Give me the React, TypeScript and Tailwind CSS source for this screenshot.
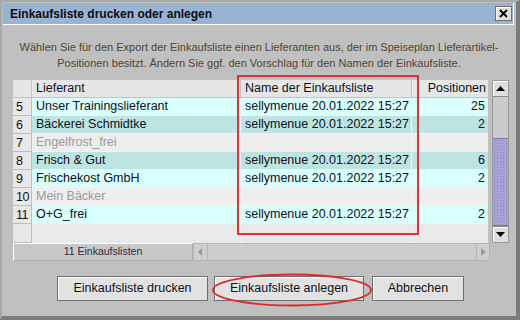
import React from "react";

const rows = [
  { n: 5, name: "Unser Trainingslieferant", list: "sellymenue 20.01.2022 15:27", pos: "25", kind: "a" },
  { n: 6, name: "Bäckerei Schmidtke", list: "sellymenue 20.01.2022 15:27", pos: "2", kind: "b" },
  { n: 7, name: "Engelfrost_frei", list: "", pos: "", kind: "off" },
  { n: 8, name: "Frisch & Gut", list: "sellymenue 20.01.2022 15:27", pos: "6", kind: "b" },
  { n: 9, name: "Frischekost GmbH", list: "sellymenue 20.01.2022 15:27", pos: "2", kind: "a" },
  { n: 10, name: "Mein Bäcker", list: "", pos: "", kind: "off" },
  { n: 11, name: "O+G_frei", list: "sellymenue 20.01.2022 15:27", pos: "2", kind: "a" },
];

const rowBg: Record<string, string> = {
  a: "bg-[#d9ffff] text-[#101018]",
  b: "bg-[#bde3e3] text-[#101018]",
  off: "bg-[#eeeeee] text-[#9a9a9a]",
};

function Btn({ children, w }: { children: React.ReactNode; w: string }) {
  return (
    <div className={`${w} h-[25px] border border-[#6f6f6f] bg-[#e2e2e2] shadow-[inset_1px_1px_0_#ffffff] flex items-center justify-center text-[12.5px] text-[#101018]`}>
      {children}
    </div>
  );
}

export default function App() {
  return (
    <div className="relative w-[520px] h-[320px] bg-[#c0c0c0] border-l-2 border-t-2 border-[#a9a9a9] border-r-4 border-b-4 border-r-[#7b7b7b] border-b-[#7b7b7b] font-['Liberation_Sans',Arial,sans-serif] overflow-hidden">
      {/* title bar */}
      <div className="ml-[1px] mr-[2px] mt-[1px] h-[22px] bg-[#99b4d3] border-b border-r border-white flex items-center justify-between pl-[7px] pr-[1px]">
        <span className="font-bold text-[12px] text-[#0c0c14]">Einkaufsliste drucken oder anlegen</span>
        <div className="w-[17px] h-[15px] bg-[#dedede] border border-[#707070] shadow-[inset_1px_1px_0_#ffffff] flex items-center justify-center">
          <svg width="9" height="9" viewBox="0 0 9 9">
            <path d="M1 1 L8 8 M8 1 L1 8" stroke="#000" strokeWidth="1.8" />
          </svg>
        </div>
      </div>

      {/* description */}
      <div className="mt-[14px] text-center text-[11px] leading-[16px] text-[#4e4630]">
        <div>Wählen Sie für den Export der Einkaufsliste einen Lieferanten aus, der im Speiseplan Lieferartikel-</div>
        <div>Positionen besitzt. Ändern Sie ggf. den Vorschlag für den Namen der Einkaufsliste.</div>
      </div>

      {/* table */}
      <div className="ml-[11px] mt-[9px] flex">
        <div className="flex flex-col">
          <div className="flex h-[18px] text-[12.5px] text-[#101018]">
            <div className="w-[19px] bg-[#e6e6e6] border-r border-b border-[#c4c4c4]" />
            <div className="w-[209px] bg-[#e6e6e6] border-r border-b border-[#c4c4c4] pl-[4px] leading-[17px]">Lieferant</div>
            <div className="w-[171px] bg-[#e6e6e6] border-r border-b border-[#c4c4c4] pl-[4px] leading-[17px]">Name der Einkaufsliste</div>
            <div className="w-[76px] bg-[#e6e6e6] border-b border-[#c4c4c4] pr-[2px] text-right leading-[17px]">Positionen</div>
          </div>
          {rows.map((r) => (
            <div key={r.n} className="flex h-[18px] text-[12.5px]">
              <div className="w-[19px] bg-[#e8e8e8] border-r border-b border-[#bdbdbd] pl-[3px] leading-[18px] text-[#101018] tracking-[-0.5px]">{r.n}</div>
              <div className={`w-[209px] ${rowBg[r.kind]} border-r border-b border-[#f2f2f2] pl-[4px] leading-[17px]`}>{r.name}</div>
              <div className={`w-[171px] ${rowBg[r.kind]} border-r border-b border-[#f2f2f2] pl-[4px] leading-[17px]`}>{r.list}</div>
              <div className={`w-[76px] ${rowBg[r.kind]} border-b border-[#f2f2f2] pr-[3px] text-right leading-[17px]`}>{r.pos}</div>
            </div>
          ))}
          <div className="flex h-[19px]">
            <div className="w-[19px] bg-[#e8e8e8] border-r border-b border-[#bdbdbd]" />
            <div className="w-[209px] bg-[#e9e9e9] border-r border-[#f2f2f2]" />
            <div className="w-[171px] bg-[#e9e9e9] border-r border-[#f2f2f2]" />
            <div className="w-[76px] bg-[#e9e9e9]" />
          </div>
          {/* footer: count + horizontal scrollbar */}
          <div className="flex h-[18px]">
            <div className="w-[180px] bg-[#c8c8c8] border border-[#b0b0b0] border-t-white border-l-white flex items-center justify-center text-[10.5px] text-[#2c2c48]">11 Einkaufslisten</div>
            <div className="w-[15px] bg-[#cfcfcf] border border-[#b5b5b5] flex items-center justify-center">
              <svg width="5" height="8" viewBox="0 0 5 8"><path d="M4 0 L0 4 L4 8 Z" fill="#9c9c9c" /></svg>
            </div>
            <div className="w-[268px] bg-[#cdcdcd] border-t border-b border-[#b5b5b5]" />
            <div className="w-[14px] bg-[#cfcfcf] border border-[#b5b5b5] flex items-center justify-center">
              <svg width="5" height="8" viewBox="0 0 5 8"><path d="M0 0 L5 4 L0 8 Z" fill="#9c9c9c" /></svg>
            </div>
          </div>
        </div>

        {/* vertical scrollbar */}
        <div className="ml-[2px] w-[17px] h-[163px] flex flex-col border border-[#9a9a9a]">
          <div className="h-[16px] bg-[#dedede] border-b border-[#8a8a8a] shadow-[inset_1px_1px_0_#ffffff] flex items-center justify-center">
            <svg width="9" height="5" viewBox="0 0 9 5"><path d="M0 5 L4.5 0 L9 5 Z" fill="#000" /></svg>
          </div>
          <div className="h-[41px] bg-[#cbcbcb]" />
          <div className="flex-1 bg-[#a4a4d6] bg-[radial-gradient(#8a8ac0_0.6px,transparent_0.8px)] bg-[length:3px_3px] border-y border-[#7c7cb0]" />
          <div className="h-[16px] bg-[#dedede] border-t border-[#8a8a8a] shadow-[inset_1px_1px_0_#ffffff] flex items-center justify-center">
            <svg width="9" height="5" viewBox="0 0 9 5"><path d="M0 0 L4.5 5 L9 0 Z" fill="#000" /></svg>
          </div>
        </div>
      </div>

      {/* buttons */}
      <div className="mt-[15px] ml-[55px] flex gap-[6px]">
        <Btn w="w-[151px]">Einkaufsliste drucken</Btn>
        <Btn w="w-[150px]">Einkaufsliste anlegen</Btn>
        <div className="ml-[2px]">
          <Btn w="w-[92px]">Abbrechen</Btn>
        </div>
      </div>

      {/* red annotations */}
      <div className="absolute left-[235px] top-[73px] w-[182px] h-[160px] border-2 border-[#e03434]" />
      <svg className="absolute left-[208px] top-[270px]" width="164" height="36" viewBox="0 0 164 36">
        <ellipse cx="82" cy="18" rx="79" ry="15.5" fill="none" stroke="#dc2a2a" strokeWidth="1.8" />
      </svg>
    </div>
  );
}
